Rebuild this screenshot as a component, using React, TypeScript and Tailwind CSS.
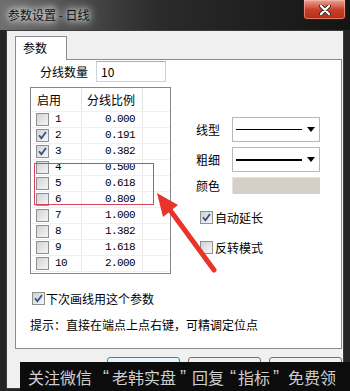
import React from 'react';

const rows = [
  { n: 1, v: '0.000', on: false },
  { n: 2, v: '0.191', on: true },
  { n: 3, v: '0.382', on: true },
  { n: 4, v: '0.500', on: false },
  { n: 5, v: '0.618', on: false },
  { n: 6, v: '0.809', on: false },
  { n: 7, v: '1.000', on: false },
  { n: 8, v: '1.382', on: false },
  { n: 9, v: '1.618', on: false },
  { n: 10, v: '2.000', on: false },
];

// Win7 style checkbox
function Check({ on }: { on?: boolean }) {
  return (
    <span className="flex h-[13px] w-[13px] shrink-0 items-center justify-center border border-[#8e8f8f] bg-gradient-to-br from-[#cfd2d6] to-[#f7f7f7]">
      {on && (
        <svg width="9" height="9" viewBox="0 0 9 9">
          <path d="M1 4.2 L3.4 7.2 L8 1" stroke="#3a4d86" strokeWidth="1.8" fill="none" />
        </svg>
      )}
    </span>
  );
}

function LineSelect({ thick }: { thick?: boolean }) {
  return (
    <div className="flex h-[25px] w-[88px] items-center border border-[#b5b8be] bg-white pl-[3px] pr-[4px]">
      <div className={thick ? 'h-[2px] w-[66px] bg-black' : 'h-px w-[66px] bg-black'} />
      <svg className="ml-auto" width="8" height="5" viewBox="0 0 8 5">
        <path d="M0 0 H8 L4 5 Z" fill="#000" />
      </svg>
    </div>
  );
}

export default function App() {
  return (
    <div className="relative h-[391px] w-[350px] overflow-hidden bg-[#252525] font-['Noto_Sans_CJK_SC',sans-serif] text-[12px] leading-none text-black">
      {/* title bar */}
      <div className="flex h-[30px] items-start bg-gradient-to-r from-[#6e6e6e] via-[#2b2b2b] via-45% to-[#141414]">
        <div className="pl-[8px] pt-[9px] text-[12px] text-[#111] [text-shadow:0_0_6px_#fff,0_0_10px_#ddd,0_0_14px_#ccc]">
          参数设置 - 日线
        </div>
        <div className="ml-auto mr-[4px] flex h-[20px] w-[43px] items-center justify-center rounded-b-[4px] border border-t-0 border-[#4a1208] bg-gradient-to-b from-[#e9a293] via-[#c8402c] to-[#b92c12] shadow-[inset_0_0_0_1px_rgba(255,200,190,0.5)]">
          <svg width="12" height="10" viewBox="0 0 12 10">
            <path d="M2 1 L10 9 M10 1 L2 9" stroke="#3a2a2a" strokeWidth="4" strokeLinecap="round" />
            <path d="M2 1 L10 9 M10 1 L2 9" stroke="#fff" strokeWidth="2.2" strokeLinecap="round" />
          </svg>
        </div>
      </div>

      {/* client area */}
      <div className="mx-[6px] h-[359px] border border-[#3c3c3c] bg-[#f0f0f0] pl-[8px] pr-[1px] pt-[5px]">
        <div className="relative z-10 -mb-px flex h-[24px] w-[52px] items-center border border-b-0 border-[#898c95] bg-white pl-[7px] pb-[1px]">
          参数
        </div>
        <div className="h-[290px] border border-[#898c95] bg-white">
          {/* 分线数量 */}
          <div className="mt-px flex h-[21px] items-center pl-[24px]">
            <span className="w-[56px]">分线数量</span>
            <div className="flex h-[21px] w-[70px] items-center border border-[#cdd2da] border-t-[#abadb3] bg-white pl-[4px]">
              10
            </div>
          </div>

          <div className="mt-[5px] flex">
            {/* list */}
            <div className="ml-[14px] flex h-[187px] w-[141px] flex-col border border-[#828790] bg-white">
              <div className="flex h-[24px] shrink-0 items-center border-b border-[#f0f0f0]">
                <div className="flex h-full w-[51px] items-center border-r border-[#e3e3e3] pl-[6px]">启用</div>
                <div className="flex h-full w-[61px] items-center border-r border-[#e3e3e3] pl-[5px]">分线比例</div>
              </div>
              {rows.map((r) => (
                <div key={r.n} className="flex h-[16px] shrink-0 items-center border-b border-[#f0f0f0]">
                  <div className="flex h-full w-[51px] items-center border-r border-[#e8e8e8] pl-[5px]">
                    <Check on={r.on} />
                    <span className="ml-[6px] font-['Liberation_Mono',monospace] text-[11px] tracking-[-0.6px]">{r.n}</span>
                  </div>
                  <div className="flex h-full w-[61px] items-center justify-end border-r border-[#e8e8e8] pr-[7px] font-['Liberation_Mono',monospace] text-[11px] tracking-[-0.6px]">
                    {r.v}
                  </div>
                </div>
              ))}
            </div>

            {/* right controls */}
            <div className="ml-[25px] flex flex-col pt-[30px]">
              <div className="flex items-center">
                <span className="w-[36px]">线型</span>
                <LineSelect />
              </div>
              <div className="mt-[5px] flex items-center">
                <span className="w-[36px]">粗细</span>
                <LineSelect thick />
              </div>
              <div className="mt-[5px] flex items-center">
                <span className="w-[36px]">颜色</span>
                <div className="h-[17px] w-[88px] border-t border-l border-[#e6e4df] bg-[#d4d0c8]" />
              </div>
              <div className="mt-[17px] flex items-center pl-[4px]">
                <Check on />
                <span className="ml-[2px]">自动延长</span>
              </div>
              <div className="mt-[17px] flex items-center pl-[4px]">
                <Check />
                <span className="ml-[2px]">反转模式</span>
              </div>
            </div>
          </div>

          <div className="mt-[18px] flex items-center pl-[16px]">
            <Check on />
            <span className="ml-[1px]">下次画线用这个参数</span>
          </div>
          <div className="mt-[12px] pl-[14px] leading-[16px]">提示：直接在端点上点右键，可精调定位点</div>
        </div>

        {/* buttons (mostly covered) */}
        <div className="mt-[8px] flex justify-end gap-[8px]">
          <div className="h-[23px] w-[73px] rounded-[3px] border border-[#3c7fb1] bg-gradient-to-b from-[#eaf6fd] to-[#bee6fd]" />
          <div className="h-[23px] w-[73px] rounded-[3px] border border-[#707070] bg-gradient-to-b from-[#f2f2f2] to-[#dddddd]" />
          <div className="h-[23px] w-[73px] rounded-[3px] border border-[#707070] bg-gradient-to-b from-[#f2f2f2] to-[#dddddd]" />
        </div>
      </div>

      {/* annotation */}
      <div className="absolute left-[34px] top-[163px] h-[42px] w-[120px] border border-[#d8455c]" />
      <svg className="pointer-events-none absolute left-0 top-0" width="350" height="391" viewBox="0 0 350 391">
        <path d="M170 210 L214 270" stroke="#e8342a" strokeWidth="5" strokeLinecap="round" />
        <path d="M157 193 L178 205 L163 217 Z" fill="#e8342a" />
      </svg>

      {/* watermark */}
      <div className="absolute left-[20px] top-[362px] flex h-[29px] w-[330px] items-center bg-[#0c0c0c] pl-[8px] text-[16px] whitespace-nowrap text-[#cfcfcf]">
        <span>关注微信</span>
        <span className="ml-[11px] font-['Liberation_Sans',sans-serif] text-[18px]">“</span>
        <span className="ml-[3px]">老韩实盘</span>
        <span className="ml-[4px] font-['Liberation_Sans',sans-serif] text-[18px]">”</span>
        <span className="ml-[6px]">回复</span>
        <span className="ml-[6px] font-['Liberation_Sans',sans-serif] text-[18px]">“</span>
        <span className="ml-[2px]">指标</span>
        <span className="ml-[3px] font-['Liberation_Sans',sans-serif] text-[18px]">”</span>
        <span className="ml-[9px]">免费领</span>
      </div>
    </div>
  );
}
